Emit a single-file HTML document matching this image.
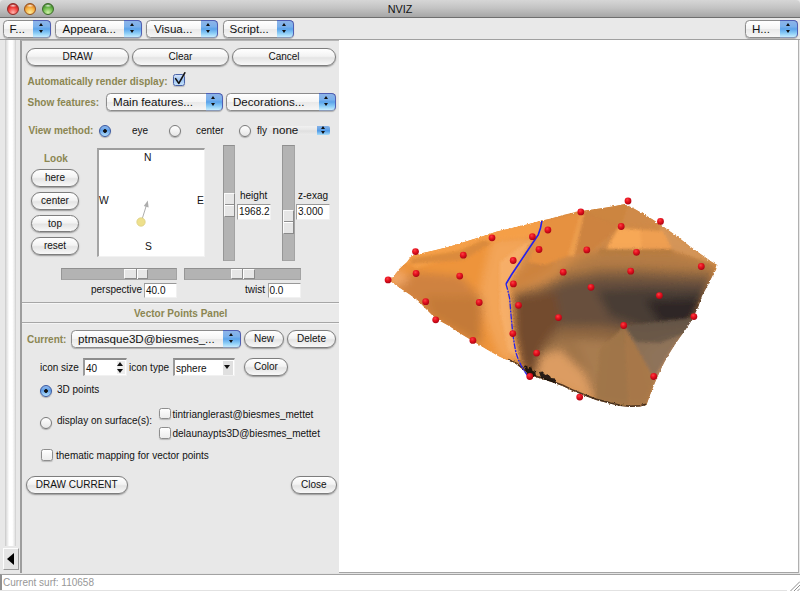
<!DOCTYPE html>
<html><head><meta charset="utf-8"><title>NVIZ</title>
<style>
html,body{margin:0;padding:0;}
body{width:800px;height:591px;overflow:hidden;background:#e8e8e8;font-family:"Liberation Sans",sans-serif;font-size:10px;color:#111;position:relative;}
.abs,.abs *{position:absolute;box-sizing:border-box;}
#win{position:absolute;left:0;top:0;width:800px;height:591px;overflow:hidden;}
#titlebar{left:0;top:0;width:800px;height:18px;border-radius:4px 4px 0 0;background:linear-gradient(#d6d6d6,#c4c4c4 45%,#a6a6a6);border-bottom:1px solid #6e6e6e;}
#title{left:0;width:800px;top:1px;height:16px;line-height:16px;text-align:center;font-size:10.8px;color:#111;}
.tl{width:12px;height:12px;border-radius:50%;top:3px;}
#menubar{left:0;top:18px;width:800px;height:22px;background:#e9e9e9;border-bottom:1px solid #a0a0a0;}
.pop{height:17.5px;border:1px solid #8c8c8c;border-radius:4.5px;background:linear-gradient(#ffffff,#f4f4f4 50%,#e9e9e9 52%,#f6f6f6);box-shadow:0 1px 1px rgba(0,0,0,.25);font-size:11.6px;line-height:15px;color:#111;white-space:nowrap;}
.pop .t{left:8px;top:0;}
.pop.p .t{top:-0.5px;}
.pop .b{right:-1px;top:-1px;width:17.5px;height:17.5px;background:linear-gradient(#8db4e8 0%,#79b0ec 35%,#5ba3ea 50%,#8accf6 76%,#c6ecfe 100%);border:1px solid #4f5fb4;border-left:0;border-bottom-color:#8a9ab8;border-radius:0 4.5px 4.5px 0;}
.pop .b:before{content:"";position:absolute;left:5.6px;top:2.4px;border:2.7px solid transparent;border-top:0;border-bottom:3.5px solid #111;}
.pop .b:after{content:"";position:absolute;left:5.6px;top:9.2px;border:2.7px solid transparent;border-bottom:0;border-top:3.5px solid #111;}
.btn{height:17.5px;border:1px solid #7d7d7d;border-radius:9px;background:linear-gradient(#ffffff,#f3f3f3 45%,#e4e4e4 55%,#f8f8f8);box-shadow:0 1px 1.5px rgba(0,0,0,.35);text-align:center;font-size:10px;line-height:15.5px;color:#111;white-space:nowrap;}
.lbl{white-space:nowrap;line-height:14px;height:14px;color:#111;font-size:10px;}
.olive{color:#8b8652;font-weight:bold;}
.radio{width:12px;height:12px;border-radius:50%;border:1px solid #7a7a7a;background:linear-gradient(#ffffff,#e6e6e6);box-shadow:0 1px 1px rgba(0,0,0,.25);}
.radio.on{border-color:#3a58a0;background:radial-gradient(circle at 50% 50%,#111 0,#111 1.5px,rgba(0,0,0,0) 2.2px),linear-gradient(#8cb6ec,#62a0e8 45%,#b6e2fc);}
.chk{width:11.5px;height:11.5px;border:1px solid #8e8e8e;border-radius:2.5px;background:linear-gradient(#ffffff,#ececec);box-shadow:0 1px 1px rgba(0,0,0,.2);}
.entry{background:#fff;border:1px solid #f1f1f1;border-top:1.5px solid #989898;border-left:1.5px solid #a2a2a2;font-size:10px;line-height:13px;padding-left:1px;white-space:nowrap;overflow:hidden;color:#111;}
.trough{background:#b3b3b3;border:1px solid #a3a3a3;border-top-color:#8f8f8f;border-left-color:#969696;}
.knob{background:#e6e6e6;border:1px solid #fafafa;border-right-color:#8a8a8a;border-bottom-color:#8a8a8a;}
</style></head>
<body>
<div id="win" class="abs">
  <div id="titlebar">
    <div class="tl" style="left:6.5px;background:radial-gradient(ellipse 38% 16% at 50% 17%,rgba(255,255,255,.85),rgba(255,255,255,0)),radial-gradient(circle at 50% 85%,#ffb4ae 0,#f2403c 50%,#b01c1a 85%,#8a1a18 100%);border:0.5px solid #8d2a26;"></div>
    <div class="tl" style="left:24px;background:radial-gradient(ellipse 38% 16% at 50% 17%,rgba(255,255,255,.85),rgba(255,255,255,0)),radial-gradient(circle at 50% 85%,#ffee9c 0,#f6b040 50%,#c86a1c 85%,#a4501a 100%);border:0.5px solid #96521d;"></div>
    <div class="tl" style="left:41.5px;background:radial-gradient(ellipse 38% 16% at 50% 17%,rgba(255,255,255,.8),rgba(255,255,255,0)),radial-gradient(circle at 50% 85%,#d0f2a8 0,#6cba4c 50%,#3a8028 85%,#2c6a22 100%);border:0.5px solid #3c6a2a;"></div>
    <div id="title">NVIZ</div>
  </div>
  <div id="menubar">
    <div class="pop" style="left:2.5px;top:2px;width:48px;"><span class="t" style="left:6px">F...</span><div class="b"></div></div>
    <div class="pop" style="left:55px;top:2px;width:86.5px;"><span class="t" style="left:6.5px">Appeara...</span><div class="b"></div></div>
    <div class="pop" style="left:146px;top:2px;width:72px;"><span class="t" style="left:7px">Visua...</span><div class="b"></div></div>
    <div class="pop" style="left:222.5px;top:2px;width:71.5px;"><span class="t" style="left:6px">Script...</span><div class="b"></div></div>
    <div class="pop" style="left:745px;top:2px;width:52.5px;"><span class="t" style="left:6px">H...</span><div class="b"></div></div>
  </div>

  <!-- left scroll strip -->
  <div style="left:5px;top:40px;width:11px;height:506px;background:linear-gradient(90deg,#d9d9d9,#ffffff 35%,#ffffff 70%,#e2e2e2);border-left:1px solid #cfcfcf;border-right:1px solid #d4d4d4;"></div>
  <div style="left:2.5px;top:548px;width:16px;height:22px;background:#e4e4e4;border:1px solid #fdfdfd;border-right-color:#9a9a9a;border-bottom-color:#9a9a9a;">
    <div style="left:3.5px;top:3.5px;width:0;height:0;border:6.6px solid transparent;border-left:0;border-right:7.2px solid #000;"></div>
  </div>

  <!-- panel frame -->
  <div id="panel" style="left:20px;top:40px;width:319px;height:533px;background:#e8e8e8;border-left:2px solid #9d9d9d;border-top:1px solid #b5b5b5;"></div>

  <!-- canvas -->
  <div id="canvas" style="left:339px;top:40px;width:460px;height:533px;background:#fff;border-right:1px solid #b0b0b0;border-bottom:1px solid #a5a5a5;"></div>

  <!-- status bar -->
  <div style="left:0;top:573px;width:800px;height:18px;background:#e4e4e4;"></div>
  <div style="left:0;top:573.5px;width:800px;height:16px;background:#fff;border-top:1.5px solid #a2a2a2;border-left:2px solid #8f8f8f;"></div>
  <div style="left:0;top:589.5px;width:787px;height:1.5px;background:#e2e2e2;"></div>
  <div style="left:787px;top:589.5px;width:13px;height:1.5px;background:#fff;"></div>
  <svg style="left:788px;top:579px;" width="12" height="12" viewBox="0 0 12 12"><path d="M2.5 12 L12 2.5 M6 12 L12 6 M9.5 12 L12 9.5" stroke="#8e8e8e" stroke-width="1" fill="none"/></svg>
  <div class="lbl" style="left:3px;top:576px;color:#979797;font-size:10px;">Current surf: 110658</div>

  <!-- Row 1 buttons -->
  <div class="btn" style="left:26px;top:48px;width:103px;">DRAW</div>
  <div class="btn" style="left:132px;top:48px;width:97px;">Clear</div>
  <div class="btn" style="left:232px;top:48px;width:104px;">Cancel</div>

  <div class="lbl olive" style="left:27.5px;top:74.5px;">Automatically render display:</div>
  <div class="chk" style="left:173px;top:73.5px;width:12px;height:12px;border-color:#4a63a8;background:linear-gradient(#d4e4fa,#9cc2f0 50%,#c4e2fc);"></div>
  <svg style="left:170px;top:68px;" width="20" height="20" viewBox="170 68 20 20"><path d="M175.6 78.6 L178.8 83.4 L184.8 72.8" fill="none" stroke="#111" stroke-width="1.6" stroke-linecap="round" stroke-linejoin="round"/></svg>

  <div class="lbl olive" style="left:27.5px;top:96px;">Show features:</div>
  <div class="pop p" style="left:106px;top:93px;width:117px;"><span class="t" style="left:6px">Main features...</span><div class="b"></div></div>
  <div class="pop p" style="left:226px;top:93px;width:110px;"><span class="t" style="left:6px">Decorations...</span><div class="b"></div></div>

  <div class="lbl olive" style="left:28.5px;top:124px;">View method:</div>
  <div class="radio on" style="left:99px;top:124.5px;"></div>
  <div class="lbl" style="left:132px;top:123.5px;">eye</div>
  <div class="radio" style="left:169px;top:124.5px;"></div>
  <div class="lbl" style="left:196px;top:123.5px;">center</div>
  <div class="radio" style="left:239px;top:124.5px;"></div>
  <div class="lbl" style="left:257px;top:123.5px;">fly</div>
  <div style="left:269px;top:126px;width:48px;height:8.5px;background:linear-gradient(#f1f1f1,#e6e6e6 48%,#dedede 52%,#ebebeb);"></div>
  <div style="left:316.7px;top:125.5px;width:13px;height:9.5px;border-radius:0 2px 2px 0;background:linear-gradient(#86b2e6,#5a9ee6 48%,#4c98e6 52%,#a8defa);">
    <div style="left:4.8px;top:0.6px;border:2.3px solid transparent;border-top:0;border-bottom:3px solid #111;width:0;height:0;"></div>
    <div style="left:4.8px;top:5.6px;border:2.3px solid transparent;border-bottom:0;border-top:3px solid #111;width:0;height:0;"></div>
  </div>
  <div class="lbl" style="left:272.5px;top:123px;font-size:11.6px;">none</div>

  <!-- Look -->
  <div class="lbl olive" style="left:44px;top:152px;">Look</div>
  <div class="btn" style="left:31px;top:169px;width:48px;">here</div>
  <div class="btn" style="left:31px;top:192px;width:48px;">center</div>
  <div class="btn" style="left:31px;top:214.5px;width:48px;">top</div>
  <div class="btn" style="left:31px;top:237px;width:48px;">reset</div>

  <!-- compass -->
  <div style="left:96.5px;top:148px;width:108px;height:108.5px;background:#fff;border-top:2px solid #9e9e9e;border-left:2px solid #a4a4a4;border-right:1px solid #f2f2f2;border-bottom:1px solid #f2f2f2;"></div>
  <div class="lbl" style="left:144px;top:151px;font-size:10.3px;">N</div>
  <div class="lbl" style="left:99px;top:194px;font-size:10.3px;">W</div>
  <div class="lbl" style="left:197px;top:194px;font-size:10.3px;">E</div>
  <div class="lbl" style="left:145px;top:239.5px;font-size:10.3px;">S</div>
  <svg style="left:130px;top:195px;" width="30" height="36" viewBox="130 195 30 36">
    <line x1="141.5" y1="221" x2="146.5" y2="205" stroke="#adadad" stroke-width="1"/>
    <path d="M147.8 200.6 L148.6 207.6 L143.8 205.9 Z" fill="#adadad"/>
    <circle cx="141" cy="222" r="4.2" fill="#eee08c" stroke="#dccf84" stroke-width="0.8"/>
  </svg>

  <!-- vertical sliders -->
  <div class="trough" style="left:223px;top:145px;width:12px;height:116px;"></div>
  <div class="knob" style="left:224px;top:192.5px;width:10.5px;height:24.5px;"></div>
  <div style="left:224.5px;top:204px;width:9.5px;height:2px;border-top:1px solid #8e8e8e;border-bottom:1px solid #fff;"></div>
  <div class="lbl" style="left:240px;top:188.5px;">height</div>
  <div class="entry" style="left:237px;top:204px;width:33.5px;height:16px;">1968.2</div>

  <div class="trough" style="left:282px;top:145px;width:12.5px;height:116px;"></div>
  <div class="knob" style="left:283px;top:209.5px;width:10.5px;height:24px;"></div>
  <div style="left:283.5px;top:221px;width:9.5px;height:2px;border-top:1px solid #8e8e8e;border-bottom:1px solid #fff;"></div>
  <div class="lbl" style="left:298px;top:188.5px;">z-exag</div>
  <div class="entry" style="left:296px;top:204px;width:33.5px;height:16px;">3.000</div>

  <!-- horizontal sliders -->
  <div class="trough" style="left:61px;top:267.5px;width:116px;height:12px;"></div>
  <div class="knob" style="left:124px;top:268.5px;width:24px;height:10.5px;"></div>
  <div style="left:135.5px;top:269px;width:2px;height:9.5px;border-left:1px solid #8e8e8e;border-right:1px solid #fff;"></div>
  <div class="lbl" style="left:91px;top:283px;">perspective</div>
  <div class="entry" style="left:144px;top:282.5px;width:33px;height:15.5px;">40.0</div>

  <div class="trough" style="left:184px;top:267.5px;width:116.5px;height:12px;"></div>
  <div class="knob" style="left:230.5px;top:268.5px;width:24px;height:10.5px;"></div>
  <div style="left:242px;top:269px;width:2px;height:9.5px;border-left:1px solid #8e8e8e;border-right:1px solid #fff;"></div>
  <div class="lbl" style="left:245px;top:283px;">twist</div>
  <div class="entry" style="left:267.5px;top:282.5px;width:33px;height:15.5px;">0.0</div>

  <!-- Vector points panel header -->
  <div style="left:22px;top:302px;width:317px;height:21px;border-top:1px solid #a6a6a6;border-bottom:1px solid #a6a6a6;background:#eaeaea;box-shadow:inset 0 1px 0 #f6f6f6, 0 1px 0 #f4f4f4;"></div>
  <div class="lbl olive" style="left:134px;top:307px;">Vector Points Panel</div>

  <div class="lbl olive" style="left:27px;top:333px;">Current:</div>
  <div class="pop p" style="left:71px;top:330px;width:169.5px;"><span class="t" style="left:6px">ptmasque3D@biesmes_...</span><div class="b"></div></div>
  <div class="btn" style="left:244px;top:330px;width:40px;">New</div>
  <div class="btn" style="left:287px;top:330px;width:49px;">Delete</div>

  <div class="lbl" style="left:40px;top:361px;">icon size</div>
  <div class="entry" style="left:83px;top:358px;width:43.5px;height:17.5px;padding-top:2px;border-top:2px solid #8c8c8c;border-left:2px solid #9a9a9a;">40</div>
  <div style="left:116.5px;top:361px;width:8.5px;height:13px;background:#ededed;">
    <div style="left:0.5px;top:1px;width:0;height:0;border:3.7px solid transparent;border-top:0;border-bottom:4.5px solid #111;"></div>
    <div style="left:0.5px;top:7.5px;width:0;height:0;border:3.7px solid transparent;border-bottom:0;border-top:4.5px solid #111;"></div>
  </div>
  <div class="lbl" style="left:129px;top:361px;">icon type</div>
  <div class="entry" style="left:173px;top:358px;width:61.5px;height:17.5px;padding-top:2px;border-top:2px solid #8c8c8c;border-left:2px solid #9a9a9a;">sphere</div>
  <div style="left:222.5px;top:360.5px;width:10.5px;height:14px;background:#e0e0e0;">
    <div style="left:1.8px;top:4px;width:0;height:0;border:3.4px solid transparent;border-bottom:0;border-top:4.5px solid #111;"></div>
  </div>
  <div class="btn" style="left:244px;top:358px;width:44px;">Color</div>

  <div class="radio on" style="left:40px;top:384.5px;"></div>
  <div class="lbl" style="left:57px;top:383px;">3D points</div>

  <div class="radio" style="left:40px;top:416.5px;"></div>
  <div class="lbl" style="left:57px;top:414px;">display on surface(s):</div>
  <div class="chk" style="left:159px;top:407.5px;"></div>
  <div class="lbl" style="left:172.5px;top:408px;">tintrianglerast@biesmes_mettet</div>
  <div class="chk" style="left:159px;top:427px;"></div>
  <div class="lbl" style="left:172.5px;top:427px;">delaunaypts3D@biesmes_mettet</div>

  <div class="chk" style="left:41px;top:449px;"></div>
  <div class="lbl" style="left:56px;top:448.5px;">thematic mapping for vector points</div>

  <div class="btn" style="left:26px;top:476px;width:101.5px;">DRAW CURRENT</div>
  <div class="btn" style="left:290.5px;top:476px;width:46.5px;">Close</div>

  <!-- SURFACE -->
  <svg id="surf" style="left:340px;top:40px;" width="458" height="533" viewBox="340 40 458 533">
<defs>
<clipPath id="oc"><polygon points="389,280 392,278 400,268 407,262 411,256.5 416,254.5 434,250.5 450,246.5 466,241.5 482,236.5 497,231.5 512,228 527,224.5 542,220.5 550,218.7 565,214.5 580,211 592,209.5 603,208 615,206 623.5,204.3 632,207.5 640,212 652,219 664,227 678,237 690,246.5 702,255 712,262 717.5,265 716,270 713,275 708,285 702,296 698.5,306.5 694,316 690,323 684.5,331 679.5,338 674,346 669,354 664.5,362 660.5,370 657,378 654,385 650,395 646.5,405 640,406.5 630.5,407 620,406 609.5,403.5 596,400 584,395.5 573,391 562.5,386 550,381.5 540,378.5 529,374.5 516,364 499,356.5 486,349 473.5,341.5 461,334 450,326.5 440,321 433,316 425,308 418,300.5 409,294 400,288 392,282.5"/></clipPath>
<filter id="bl" x="-10%" y="-10%" width="120%" height="120%"><feGaussianBlur stdDeviation="4.5"/></filter>
<filter id="bs" x="-10%" y="-10%" width="120%" height="120%"><feGaussianBlur stdDeviation="1.8"/></filter>
<filter id="eb"><feGaussianBlur stdDeviation="0.5"/></filter>
<radialGradient id="dg" cx="40%" cy="32%" r="65%"><stop offset="0" stop-color="#fa4048"/><stop offset="0.45" stop-color="#ea1420"/><stop offset="1" stop-color="#b00414"/></radialGradient>
<filter id="rough" x="-5%" y="-5%" width="110%" height="110%"><feTurbulence type="fractalNoise" baseFrequency="0.45" numOctaves="2" seed="3" result="n"/><feDisplacementMap in="SourceGraphic" in2="n" scale="2.6" xChannelSelector="R" yChannelSelector="G"/></filter>
</defs>
<g filter="url(#rough)"><g clip-path="url(#oc)"><polygon points="389,280 392,278 400,268 407,262 411,256.5 416,254.5 434,250.5 450,246.5 466,241.5 482,236.5 497,231.5 512,228 527,224.5 542,220.5 550,218.7 565,214.5 580,211 592,209.5 603,208 615,206 623.5,204.3 632,207.5 640,212 652,219 664,227 678,237 690,246.5 702,255 712,262 717.5,265 716,270 713,275 708,285 702,296 698.5,306.5 694,316 690,323 684.5,331 679.5,338 674,346 669,354 664.5,362 660.5,370 657,378 654,385 650,395 646.5,405 640,406.5 630.5,407 620,406 609.5,403.5 596,400 584,395.5 573,391 562.5,386 550,381.5 540,378.5 529,374.5 516,364 499,356.5 486,349 473.5,341.5 461,334 450,326.5 440,321 433,316 425,308 418,300.5 409,294 400,288 392,282.5" fill="#e5903f"/><g filter="url(#bl)">
<polygon points="380,285 392,275 418,250 545,215 560,240 520,285 535,380 500,360 430,320" fill="#ee943a"/>
<polygon points="388,281 416,272 460,276 484,300 480,346 430,318" fill="#cf8240"/>
<polygon points="384,276 398,270 410,280 396,286" fill="#f2a868"/>
<polygon points="425,296 478,296 482,344 450,327 432,316" fill="#c47a38"/>
<polygon points="492,240 535,236 508,283 513,334 522,366 500,357 486,320 480,290" fill="#f3a559"/>
<polygon points="543,218 628,200 720,264 700,300 650,410 580,400 529,376 512,330 508,283" fill="#d08a46"/>
<polygon points="560,270 582,256 606,250 670,250 718,264 712,278 640,276 566,280" fill="#b47c44"/>
<polygon points="525,335 552,318 600,322 640,332 690,326 655,385 646,406 600,402 550,383 530,376" fill="#a07448"/>
<polygon points="534,358 560,350 585,374 596,401 550,383 532,377" fill="#dc9c62"/>
<polygon points="562,322 624,326 606,352 602,401 592,380 578,345" fill="#a87c50"/>
<polygon points="645,350 684,332 662,368 652,385" fill="#b89070"/>
<polygon points="513,293 540,286 563,275 600,268 640,268 716,272 702,302 688,334 640,344 600,340 560,338 534,356 514,340" fill="#8c6540"/>
<polygon points="515,301 545,292 566,283 600,277 640,277 712,280 702,302 690,326 640,332 600,326 560,326 534,350 516,337" fill="#67503e"/>
<polygon points="512,281 530,262 548,262 556,266 535,278 514,288" fill="#cc823c"/>
<polygon points="514,297 556,292 561,319 543,346 535,379 520,366 514,335" fill="#734b2d"/>
<polygon points="596,290 640,288 706,289 698,312 689,325 645,328 610,316" fill="#4a3c34"/>
<polygon points="645,300 703,298 698,312 689,324 660,324" fill="#2e2828"/>
</g><g filter="url(#bs)" opacity="0.9">
<polygon points="405,262 418,250 545,216 540,236 492,240 463,256 416,268" fill="#f5a048"/>
<polygon points="409,264 413,258 458,251 484,239.5 492,243 463,260" fill="#d98a3e"/>
<polygon points="500,262 532,238 508,283 513,334 520,362 508,350 500,310" fill="#f7b06a"/>
<polygon points="543,220 581,212 570,255 545,265 528,262 538,235" fill="#e8923f"/>
<polygon points="581,212 585,214 574,256 568,256" fill="#f0a050"/>
<polygon points="584,213 621,226 592,250 575,255" fill="#cc8240"/>
<polygon points="581,212 628,203 621,226" fill="#cb843f"/>
<polygon points="628,203 660,224 621,226" fill="#cf8a48"/>
<polygon points="660,224 717,265 672,250 660,231" fill="#d4965a"/>
<polygon points="618,228 663,231 672,249 606,249" fill="#f2a152"/>
<polygon points="619,228 640,230 642,249 607,249" fill="#fbab58"/>
<polygon points="600,249 672,249 673,253.5 598,254.5" fill="#b47a40"/>
<polygon points="624,326 694,318 670,352 654,378" fill="#8a7058"/>
<polygon points="624,326 694,318 686,333 660,343 636,342" fill="#685848"/>
<polygon points="624,326 654,378 646,406 628,407" fill="#a87848"/>
<polygon points="624,326 628,407 596,400 600,350" fill="#a07648"/>
</g>
<polyline points="508,360 516,364 529,374.5 540,378.5 550,381.5 562.5,386 573,391 584,395.5 596,400 609.5,403.5 620,406 630.5,407 640,406.5 646.5,405" fill="none" stroke="#2a1c12" stroke-width="3" opacity="0.8" filter="url(#eb)"/>
<path d="M524 366 L527 365 L528 369 L531 366.5 L533 372 L535 370 L536 376 L530 376 L526 372 Z M539 372 L543 371.5 L545 375 L549 374 L551 378 L555 378.5 L556 383 L548 381 L541 378 Z" fill="#15100c" opacity="0.9"/>
</g></g>
<polyline points="541.9,220.8 540.5,228 538.3,234.6 530,247 520,262 511,275.5 506,284" fill="none" stroke="#2420ee" stroke-width="1.6"/>
<polyline points="506,284 508,291 509.6,298.4 511,315 512.8,334 514.5,345 516,353 518.5,360 521.3,365.9 525,372 528.7,377.6" fill="none" stroke="#2420ee" stroke-width="1.3" stroke-dasharray="6 1 2 1"/>
<circle cx="388.1" cy="279.9" r="3.4" fill="url(#dg)"/>
<circle cx="415.5" cy="251.6" r="3.4" fill="url(#dg)"/>
<circle cx="416.1" cy="273.5" r="3.4" fill="url(#dg)"/>
<circle cx="463.3" cy="255.2" r="3.4" fill="url(#dg)"/>
<circle cx="459.7" cy="276.1" r="3.4" fill="url(#dg)"/>
<circle cx="492" cy="237.8" r="3.4" fill="url(#dg)"/>
<circle cx="513.2" cy="260.5" r="3.4" fill="url(#dg)"/>
<circle cx="532.4" cy="236.7" r="3.4" fill="url(#dg)"/>
<circle cx="539" cy="249.5" r="3.4" fill="url(#dg)"/>
<circle cx="513.4" cy="283.9" r="3.4" fill="url(#dg)"/>
<circle cx="547.9" cy="230" r="3.4" fill="url(#dg)"/>
<circle cx="425.7" cy="301.7" r="3.4" fill="url(#dg)"/>
<circle cx="479.2" cy="302.5" r="3.4" fill="url(#dg)"/>
<circle cx="580.8" cy="211.9" r="3.4" fill="url(#dg)"/>
<circle cx="628" cy="201" r="3.4" fill="url(#dg)"/>
<circle cx="621.2" cy="226.5" r="3.4" fill="url(#dg)"/>
<circle cx="660.5" cy="221.4" r="3.4" fill="url(#dg)"/>
<circle cx="586.8" cy="249.9" r="3.4" fill="url(#dg)"/>
<circle cx="636.5" cy="252.3" r="3.4" fill="url(#dg)"/>
<circle cx="563.2" cy="272.2" r="3.4" fill="url(#dg)"/>
<circle cx="630.7" cy="271.2" r="3.4" fill="url(#dg)"/>
<circle cx="701.3" cy="266.5" r="3.4" fill="url(#dg)"/>
<circle cx="591" cy="287.3" r="3.4" fill="url(#dg)"/>
<circle cx="659.4" cy="295.6" r="3.4" fill="url(#dg)"/>
<circle cx="518.5" cy="305.3" r="3.4" fill="url(#dg)"/>
<circle cx="435.7" cy="319.8" r="3.4" fill="url(#dg)"/>
<circle cx="512.8" cy="333.6" r="3.4" fill="url(#dg)"/>
<circle cx="472.9" cy="340.4" r="3.4" fill="url(#dg)"/>
<circle cx="536.6" cy="353.1" r="3.4" fill="url(#dg)"/>
<circle cx="529.8" cy="376.5" r="3.4" fill="url(#dg)"/>
<circle cx="558.5" cy="317.6" r="3.4" fill="url(#dg)"/>
<circle cx="623.7" cy="325.5" r="3.4" fill="url(#dg)"/>
<circle cx="693.9" cy="316.6" r="3.4" fill="url(#dg)"/>
<circle cx="653.7" cy="376.5" r="3.4" fill="url(#dg)"/>
<circle cx="579.7" cy="397.1" r="3.4" fill="url(#dg)"/>
</svg>
</div>
</body></html>
